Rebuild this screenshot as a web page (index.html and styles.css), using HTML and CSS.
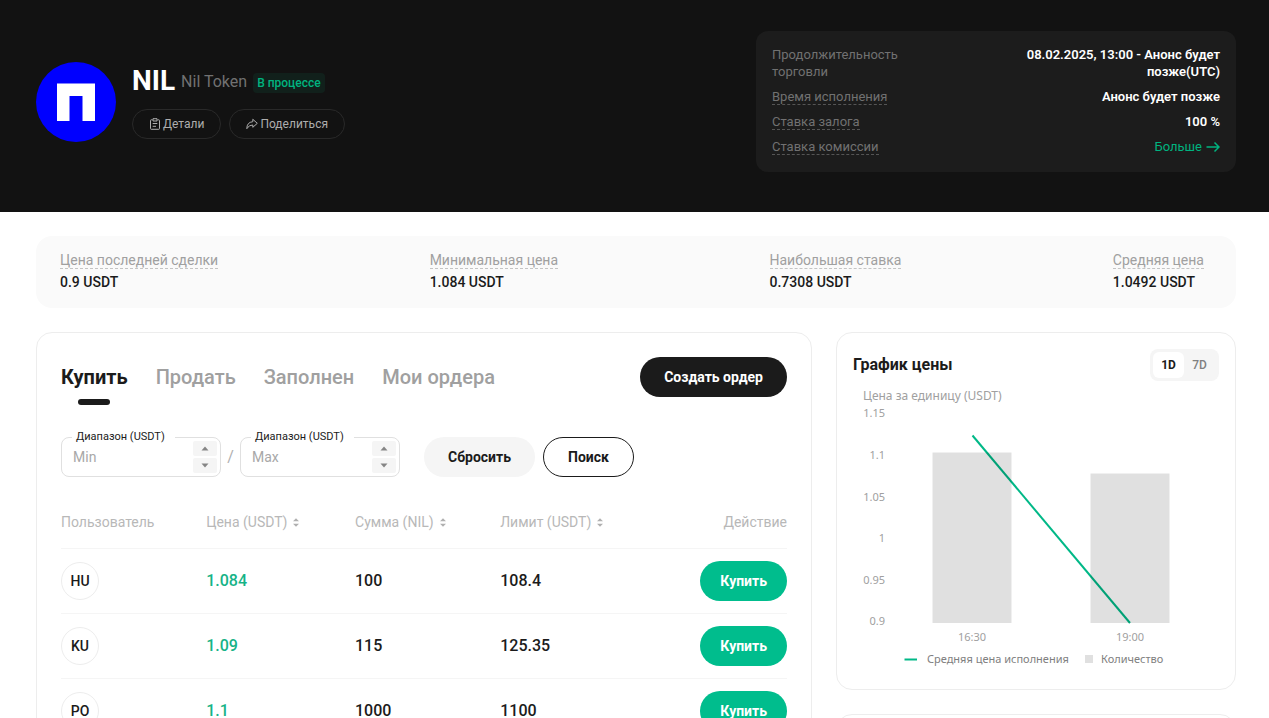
FILE: index.html
```html
<!DOCTYPE html>
<html lang="ru">
<head>
<meta charset="utf-8">
<meta name="viewport" content="width=device-width, initial-scale=1">
<title>NIL – Nil Token</title>
<link rel="stylesheet" href="styles.css">
</head>
<body>
<header class="hero">
  <div class="token">
    <svg class="token-logo" viewBox="0 0 80 80" aria-hidden="true"><circle cx="40" cy="40" r="40" fill="#0000ff"/><path d="M21 21.500H59V59H46.500V34H33.500V59H21Z" fill="#fff"/></svg>
    <div class="token-info">
      <div class="token-name">
        <h1>NIL</h1>
        <span class="token-full">Nil Token</span>
        <span class="status">В процессе</span>
      </div>
      <div class="token-actions">
        <button class="ghost" type="button"><svg width="12" height="12" viewBox="0 0 12 12" aria-hidden="true"><path d="M3.500 1.800H2.200Q1.500 1.800 1.500 2.500V10.500Q1.500 11.300 2.200 11.300H9.800Q10.500 11.300 10.500 10.500V2.500Q10.500 1.800 9.800 1.800H8.500M4 .700H8V3H4ZM3.700 5.500H8.300M3.700 8.300H7"/></svg>Детали</button>
        <button class="ghost" type="button"><svg width="12" height="12" viewBox="0 0 12 12" aria-hidden="true"><path d="M6.800 1.300 11.300 5.300 6.800 9.300V7Q3 6.800 .800 10.700 .900 4.200 6.800 3.700Z"/></svg>Поделиться</button>
      </div>
    </div>
  </div>
  <dl class="terms">
    <div><dt>Продолжительность торговли</dt><dd>08.02.2025, 13:00 - Анонс будет позже(UTC)</dd></div>
    <div><dt><span class="hint">Время исполнения</span></dt><dd>Анонс будет позже</dd></div>
    <div><dt><span class="hint">Ставка залога</span></dt><dd>100 %</dd></div>
    <div><dt><span class="hint">Ставка комиссии</span></dt><dd><a class="more" href="#fees">Больше<svg width="14" height="12" viewBox="0 0 14 12" aria-hidden="true"><path d="M.500 6H13M8.500 1.500 13 6 8.500 10.500"/></svg></a></dd></div>
  </dl>
</header>

<main>
  <dl class="stats">
    <div><dt><span class="hint">Цена последней сделки</span></dt><dd>0.9 USDT</dd></div>
    <div><dt><span class="hint">Минимальная цена</span></dt><dd>1.084 USDT</dd></div>
    <div><dt><span class="hint">Наибольшая ставка</span></dt><dd>0.7308 USDT</dd></div>
    <div><dt><span class="hint">Средняя цена</span></dt><dd>1.0492 USDT</dd></div>
  </dl>

  <div class="columns">
    <section class="card orders">
      <div class="orders-head">
        <nav class="tabs">
          <button class="tab active" type="button">Купить</button>
          <button class="tab" type="button">Продать</button>
          <button class="tab" type="button">Заполнен</button>
          <button class="tab" type="button">Мои ордера</button>
        </nav>
        <button class="pill dark" type="button">Создать ордер</button>
      </div>

      <form class="filter">
        <div class="field">
          <label for="min">Диапазон (USDT)</label>
          <input id="min" type="text" placeholder="Min">
          <div class="steps">
            <button type="button" aria-label="Увеличить минимум"><svg width="8" height="5" viewBox="0 0 8 5"><path d="M4 .500 7.500 4.500H.500Z"/></svg></button>
            <button type="button" aria-label="Уменьшить минимум"><svg width="8" height="5" viewBox="0 0 8 5"><path d="M4 4.500 7.500 .500H.500Z"/></svg></button>
          </div>
        </div>
        <span class="slash">/</span>
        <div class="field">
          <label for="max">Диапазон (USDT)</label>
          <input id="max" type="text" placeholder="Max">
          <div class="steps">
            <button type="button" aria-label="Увеличить максимум"><svg width="8" height="5" viewBox="0 0 8 5"><path d="M4 .500 7.500 4.500H.500Z"/></svg></button>
            <button type="button" aria-label="Уменьшить максимум"><svg width="8" height="5" viewBox="0 0 8 5"><path d="M4 4.500 7.500 .500H.500Z"/></svg></button>
          </div>
        </div>
        <div class="filter-actions">
          <button class="pill light" type="reset">Сбросить</button>
          <button class="pill outline" type="button">Поиск</button>
        </div>
      </form>

      <table class="book">
        <colgroup><col class="col-user"><col class="col-price"><col class="col-amount"><col class="col-limit"><col></colgroup>
        <thead>
          <tr>
            <th>Пользователь</th>
            <th>Цена (USDT)<svg class="sort" width="8" height="9" viewBox="0 0 8 9" aria-hidden="true"><path d="M4 .300 7 3.300H1ZM4 8.700 7 5.700H1Z"/></svg></th>
            <th>Сумма (NIL)<svg class="sort" width="8" height="9" viewBox="0 0 8 9" aria-hidden="true"><path d="M4 .300 7 3.300H1ZM4 8.700 7 5.700H1Z"/></svg></th>
            <th>Лимит (USDT)<svg class="sort" width="8" height="9" viewBox="0 0 8 9" aria-hidden="true"><path d="M4 .300 7 3.300H1ZM4 8.700 7 5.700H1Z"/></svg></th>
            <th>Действие</th>
          </tr>
        </thead>
        <tbody>
          <tr><td><span class="avatar">HU</span></td><td class="price">1.084</td><td>100</td><td>108.4</td><td><button class="pill buy" type="button">Купить</button></td></tr>
          <tr><td><span class="avatar">KU</span></td><td class="price">1.09</td><td>115</td><td>125.35</td><td><button class="pill buy" type="button">Купить</button></td></tr>
          <tr><td><span class="avatar">PO</span></td><td class="price">1.1</td><td>1000</td><td>1100</td><td><button class="pill buy" type="button">Купить</button></td></tr>
        </tbody>
      </table>
    </section>

    <aside class="side">
      <section class="card chart">
        <div class="chart-head">
          <h2>График цены</h2>
          <div class="range">
            <button class="on" type="button">1D</button>
            <button type="button">7D</button>
          </div>
        </div>
        <svg class="plot" viewBox="0 0 366 292" role="img" aria-label="График цены">
          <text class="axis-title" x="10" y="19">Цена за единицу (USDT)</text>
          <g text-anchor="end">
            <text x="32" y="36">1.15</text>
            <text x="32" y="78">1.1</text>
            <text x="32" y="120">1.05</text>
            <text x="32" y="161">1</text>
            <text x="32" y="203">0.95</text>
            <text x="32" y="244">0.9</text>
          </g>
          <path d="M119.500 54.500 277 242" stroke="#00b887" stroke-width="2" fill="none"/>
          <path d="M79.500 71.500H158.500V242H79.500ZM237.500 92.500H316.500V242H237.500Z" fill="#000" fill-opacity=".122"/>
          <g text-anchor="middle">
            <text x="119" y="260">16:30</text>
            <text x="277" y="260">19:00</text>
          </g>
          <path d="M51.500 278.500H64" stroke="#00b887" stroke-width="2"/>
          <text class="legend" x="74" y="282">Средняя цена исполнения</text>
          <path d="M232 274H240V282H232Z" fill="#e0e0e0"/>
          <text class="legend" x="248" y="282">Количество</text>
        </svg>
      </section>
      <section class="card next"></section>
    </aside>
  </div>
</main>
</body>
</html>
```
FILE: styles.css
```css
* { box-sizing: border-box; }

body {
  margin: 0;
  height: 100vh;
  overflow: hidden;
  background: #fff;
  color: #1b1b1b;
  font: 14px/20px Roboto, "Liberation Sans", sans-serif;
}

h1, h2, dl, dd { margin: 0; }

button {
  border: 0;
  padding: 0;
  background: none;
  color: inherit;
  font: inherit;
}

.hero {
  display: flex;
  justify-content: space-between;
  align-items: center;
  padding: 31px 33px 40px 36px;
  background: #121212;
}

.token { display: flex; align-items: center; gap: 16px; }
.token-logo { width: 80px; height: 80px; }
.token-name { display: flex; align-items: center; gap: 6px; }
.token-name h1 { color: #fff; font-size: 28px; line-height: 32px; font-weight: 700; }
.token-full { padding-top: 2px; color: #717171; font-size: 16px; }
.status {
  margin-top: 4px;
  padding: 0 4px;
  border-radius: 4px;
  background: #11201b;
  color: #00b37f;
  font-size: 12px;
  font-weight: 500;
}
.token-actions { display: flex; gap: 8px; margin-top: 12px; }
.ghost {
  display: flex;
  align-items: center;
  gap: 2px;
  height: 30px;
  padding: 0 16px;
  border: 1px solid #292929;
  border-radius: 15px;
  color: #adadad;
  font-size: 12px;
}
.ghost svg { fill: none; stroke: currentColor; stroke-width: 1; stroke-linejoin: round; }

.terms {
  display: flex;
  flex-direction: column;
  gap: 8px;
  width: 480px;
  padding: 15px 16px 17px;
  border-radius: 12px;
  background: #1c1c1c;
  font-size: 13px;
  line-height: 17px;
}
.terms div { display: flex; justify-content: space-between; }
.terms dt { max-width: 160px; color: #717171; }
.terms dd { max-width: 200px; color: #fff; font-weight: 600; text-align: right; }
.hint { border-bottom: 1px dashed currentColor; }
.terms .hint { border-color: #555; }
.more { display: flex; align-items: center; gap: 4px; color: #00b37f; font-weight: 400; text-decoration: none; }
.more svg { fill: none; stroke: currentColor; stroke-width: 1.5; }

main { padding: 24px 33px 0 36px; }

.stats {
  display: flex;
  justify-content: space-between;
  padding: 14px 32px 16px 24px;
  border-radius: 16px;
  background: #fafafa;
}
.stats dt { color: #a0a0a0; }
.stats .hint { border-color: #c4c4c4; line-height: 16px; }
.stats dd { margin-top: 2px; font-weight: 500; }

.columns {
  display: grid;
  grid-template-columns: minmax(0, 1fr) 400px;
  gap: 24px;
  align-items: start;
  margin-top: 24px;
}
.card { border: 1px solid #ededed; border-radius: 16px; }
.orders { padding: 24px; }
.orders-head { display: flex; justify-content: space-between; align-items: center; }

.tabs { display: flex; gap: 28px; }
.tab { position: relative; color: #a0a0a0; font-size: 20px; line-height: 40px; font-weight: 500; }
.tab.active { color: #1b1b1b; font-weight: 700; }
.tab.active::after {
  content: "";
  position: absolute;
  bottom: -8px;
  left: calc(50% - 16px);
  width: 32px;
  height: 6px;
  border-radius: 3px;
  background: #1b1b1b;
}

.pill { height: 40px; padding: 0 24px; border-radius: 20px; font-size: 14px; font-weight: 700; white-space: nowrap; }
.dark { background: #1b1b1b; color: #fff; }
.light { background: #f5f5f5; }
.outline { border: 1px solid #1b1b1b; }
.buy { padding: 0 20px; background: #00bd8d; color: #fff; }

.filter { display: flex; align-items: center; margin-top: 40px; }
.field {
  position: relative;
  display: flex;
  width: 160px;
  height: 40px;
  padding: 3px;
  border: 1px solid #e0e0e0;
  border-radius: 8px;
}
.field label {
  position: absolute;
  top: -9px;
  left: 10px;
  padding: 0 10px 0 4px;
  background: #fff;
  font-size: 11px;
  line-height: 16px;
}
.field input {
  flex: 1;
  min-width: 0;
  padding: 0 8px;
  border: 0;
  background: none;
  outline: 0;
  font: 14px/20px Roboto, "Liberation Sans", sans-serif;
}
.field input::placeholder { color: #a8a8a8; }
.steps { display: flex; flex-direction: column; gap: 2px; width: 24px; }
.steps button { display: flex; flex: 1; align-items: center; justify-content: center; border-radius: 2px; background: #f5f5f5; }
.steps svg { fill: #858585; }
.slash { width: 19px; color: #b0b0b0; font-size: 16px; text-align: center; }
.filter-actions { display: flex; gap: 8px; margin-left: 24px; }

.book { width: 100%; margin-top: 19px; border-collapse: collapse; table-layout: fixed; }
.col-user, .col-amount, .col-limit { width: 20%; }
.col-price { width: 20.5%; }
.book th {
  height: 52px;
  padding: 0;
  border-bottom: 1px solid #f5f5f5;
  color: #b8b8b8;
  font-weight: 400;
  text-align: left;
  white-space: nowrap;
}
.book td { height: 65px; padding: 0; border-bottom: 1px solid #f5f5f5; font-size: 16px; font-weight: 500; }
.book th:last-child, .book td:last-child { text-align: right; }
.sort { margin-left: 5px; fill: #b0b0b0; }
.book .price { color: #16b387; }
.avatar {
  display: flex;
  align-items: center;
  justify-content: center;
  width: 38px;
  height: 38px;
  border: 1px solid #ededed;
  border-radius: 50%;
  font-size: 14px;
}

.side { display: grid; gap: 24px; }
.chart { padding: 16px; }
.chart-head { display: flex; justify-content: space-between; align-items: center; }
.chart-head h2 { font-size: 16px; font-weight: 700; }
.range { display: flex; padding: 3px 4px 3px 3px; border-radius: 8px; background: #f5f5f5; }
.range button { width: 31px; height: 26px; border-radius: 6px; color: #808080; font-size: 12px; font-weight: 500; }
.range .on { background: #fff; color: #1b1b1b; font-weight: 700; }
.plot { display: block; width: 100%; }
.plot text { fill: #a0a0a0; font: 11px "Noto Sans", "Open Sans", sans-serif; }
.plot .axis-title { font-size: 12px; }
.plot .legend { fill: #808080; }
.next { height: 200px; }
```
